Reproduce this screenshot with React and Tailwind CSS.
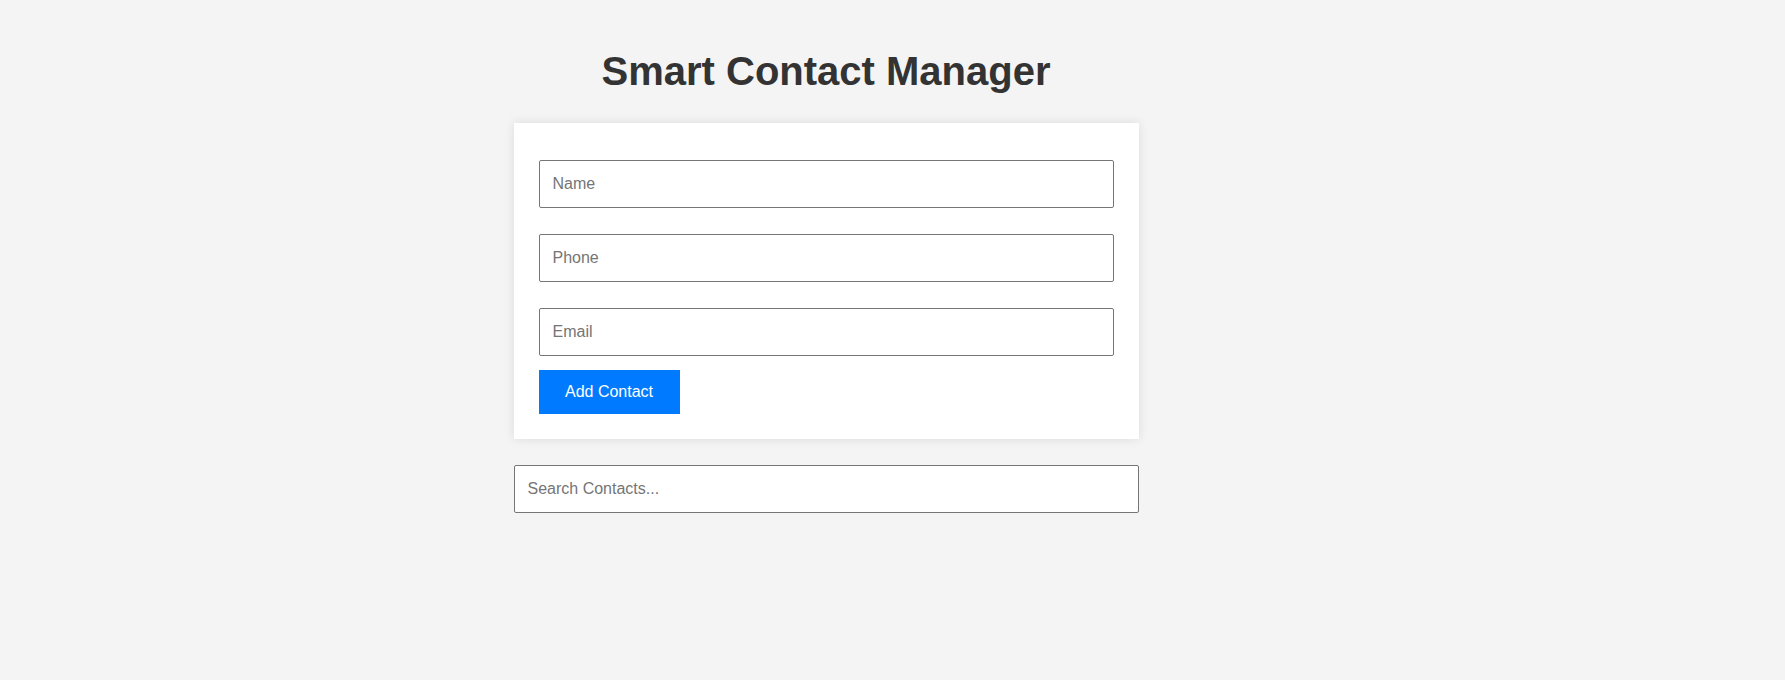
export default function App() {
    return (
        <div className="min-h-screen w-full bg-[#f4f4f4] font-['Liberation_Sans',Arial,sans-serif]">
            <div className="flex justify-center pr-[133px] pt-[49px]">
                <div className="w-[625px]">
                    <h1 className="text-center text-[40px] leading-[45px] font-bold text-[#333] mb-[29px]">
                        Smart Contact Manager
                    </h1>

                    <div className="bg-white px-[25px] pt-[37px] pb-[25px] shadow-[0_0_10px_rgba(0,0,0,0.1)]">
                        <input
                            type="text"
                            placeholder="Name"
                            className="block w-full h-[48px] px-[13px] mb-[26px] border border-[#767676] rounded-[2px] text-[16px] text-[#333] placeholder:text-[#757575] bg-white outline-none"
                        />
                        <input
                            type="text"
                            placeholder="Phone"
                            className="block w-full h-[48px] px-[13px] mb-[26px] border border-[#767676] rounded-[2px] text-[16px] text-[#333] placeholder:text-[#757575] bg-white outline-none"
                        />
                        <input
                            type="email"
                            placeholder="Email"
                            className="block w-full h-[48px] px-[13px] mb-[14px] border border-[#767676] rounded-[2px] text-[16px] text-[#333] placeholder:text-[#757575] bg-white outline-none"
                        />
                        <button className="block h-[44px] w-[141px] bg-[#007bff] text-white text-[16px]">
                            Add Contact
                        </button>
                    </div>

                    <input
                        type="text"
                        placeholder="Search Contacts..."
                        className="block w-full h-[48px] mt-[26px] px-[13px] border border-[#767676] rounded-[2px] text-[16px] text-[#333] placeholder:text-[#757575] bg-white outline-none"
                    />
                </div>
            </div>
        </div>
    );
}
